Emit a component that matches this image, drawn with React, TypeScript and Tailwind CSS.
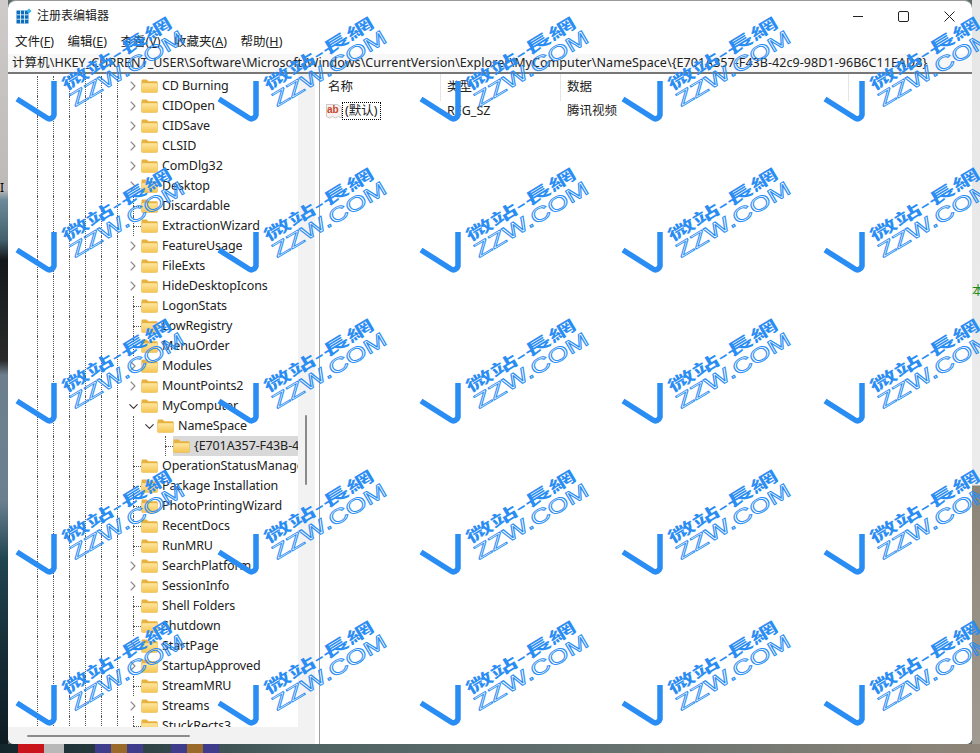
import { ChevronDown, ChevronRight } from "lucide-react";

const CJK = "font-['Noto_Sans','Noto_Sans_CJK_SC',sans-serif]";

type TreeRow = { name: string; depth?: number; kind?: "more" | "open" | "leaf"; selected?: boolean };

const ROWS: TreeRow[] = [
  { name: "CD Burning", kind: "more" },
  { name: "CIDOpen", kind: "more" },
  { name: "CIDSave", kind: "more" },
  { name: "CLSID", kind: "more" },
  { name: "ComDlg32", kind: "more" },
  { name: "Desktop", kind: "more" },
  { name: "Discardable", kind: "leaf" },
  { name: "ExtractionWizard", kind: "leaf" },
  { name: "FeatureUsage", kind: "more" },
  { name: "FileExts", kind: "more" },
  { name: "HideDesktopIcons", kind: "more" },
  { name: "LogonStats", kind: "leaf" },
  { name: "LowRegistry", kind: "leaf" },
  { name: "MenuOrder", kind: "leaf" },
  { name: "Modules", kind: "more" },
  { name: "MountPoints2", kind: "more" },
  { name: "MyComputer", kind: "open" },
  { name: "NameSpace", kind: "open", depth: 1 },
  { name: "{E701A357-F43B-42c9-98D1-96B6C11EAD8}", kind: "leaf", depth: 2, selected: true },
  { name: "OperationStatusManager", kind: "leaf" },
  { name: "Package Installation", kind: "leaf" },
  { name: "PhotoPrintingWizard", kind: "leaf" },
  { name: "RecentDocs", kind: "leaf" },
  { name: "RunMRU", kind: "leaf" },
  { name: "SearchPlatform", kind: "more" },
  { name: "SessionInfo", kind: "more" },
  { name: "Shell Folders", kind: "leaf" },
  { name: "Shutdown", kind: "leaf" },
  { name: "StartPage", kind: "more" },
  { name: "StartupApproved", kind: "more" },
  { name: "StreamMRU", kind: "leaf" },
  { name: "Streams", kind: "more" },
  { name: "StuckRects3", kind: "leaf" },
];

const MENUS = [
  ["文件(", "F", ")"],
  ["编辑(", "E", ")"],
  ["查看(", "V", ")"],
  ["收藏夹(", "A", ")"],
  ["帮助(", "H", ")"],
];

function RegeditIcon() {
  return (
    <svg width="16" height="16" viewBox="0 0 16 16" className="shrink-0">
      <rect x="0.5" y="2.5" width="12" height="13" fill="#0f6cbd" />
      <path d="M4.5 2.5v13M8.5 2.5v13M.5 6.8h12M.5 11.2h12" stroke="#dff1fb" strokeWidth="0.9" />
      <path d="M13 0.5l2.5 2.5-2.5 2.5-2.5-2.5z" fill="#35b6e6" />
    </svg>
  );
}

function FolderIcon() {
  return (
    <svg width="17" height="14" viewBox="0 0 17 14" className="shrink-0">
      <defs>
        <linearGradient id="folder-body" x1="0" y1="0" x2="0" y2="1">
          <stop offset="0" stopColor="#ffe7a0" />
          <stop offset="1" stopColor="#f5c451" />
        </linearGradient>
      </defs>
      <path d="M0.5 1.5a1 1 0 0 1 1-1h4.2l1.6 1.8h8.2a1 1 0 0 1 1 1V5H.5z" fill="#e8b23e" />
      <path d="M.5 4h16v8.5a1 1 0 0 1-1 1h-14a1 1 0 0 1-1-1z" fill="url(#folder-body)" stroke="#e6b548" strokeWidth="0.5" />
    </svg>
  );
}

function ValueIcon() {
  return (
    <svg width="16" height="16" viewBox="0 0 16 16" className="shrink-0">
      <path d="M.5 1.500h11l4 3v10.500l-3-1.500-3 1.500-3-1.500-3 1.500-3-1.500z" fill="#f6f1ef" stroke="#b9b4b4" strokeWidth="0.7" />
      <text x="1" y="10" fontSize="10" fontWeight="700" fill="#c8452d" fontFamily="Liberation Sans, sans-serif">
        ab
      </text>
    </svg>
  );
}

function Guide({ stub }: { stub?: boolean }) {
  return (
    <span className="relative h-5 w-4 shrink-0">
      <span className="absolute top-0 bottom-0 left-2 border-l border-dotted border-[#555]" />
      {stub && <span className="absolute top-2.5 left-2 w-2 border-t border-dotted border-[#555]" />}
    </span>
  );
}

function Twist({ open }: { open: boolean }) {
  return (
    <span className="flex h-5 w-4 shrink-0 items-center justify-center text-[#8a8a8a]">
      {open ? <ChevronDown size={15} strokeWidth={1.7} className="text-[#333]" /> : <ChevronRight size={16} strokeWidth={1.6} />}
    </span>
  );
}

function TreeItem({ row }: { row: TreeRow }) {
  const depth = row.depth ?? 0;
  return (
    <div className="flex h-5 items-center whitespace-nowrap">
      {Array.from({ length: 6 }, (_, i) => (
        <Guide key={i} />
      ))}
      {depth === 0 ? (
        row.kind === "leaf" ? (
          <Guide stub />
        ) : (
          <Twist open={row.kind === "open"} />
        )
      ) : (
        <Guide />
      )}
      {depth === 1 && <Twist open />}
      {depth === 2 && (
        <>
          <span className="w-4 shrink-0" />
          <Guide stub />
        </>
      )}
      <span className={`flex h-5 grow items-center ${row.selected ? "bg-[#d9d9d9]" : ""}`}>
        <FolderIcon />
        <span className="ml-1 text-[12.5px] leading-5 tracking-[-0.1px] text-[#222]">{row.name}</span>
      </span>
    </div>
  );
}

function WatermarkTile() {
  return (
    <svg width="202" height="151" viewBox="0 0 202 151" className="overflow-visible">
      <path d="M17 21 L47 40 Q50 42 53 39 L54 37 L54 3" fill="none" stroke="#2a8df3" strokeWidth="5.500" strokeLinejoin="round" />
      <text
        transform="translate(66 13) rotate(-31)"
        fontSize="16"
        fontWeight="700"
        fill="#2a8df3"
        textLength="125"
        lengthAdjust="spacingAndGlyphs"
        fontFamily="Noto Sans CJK TC, Noto Sans CJK SC, sans-serif"
      >
        微站-長網
      </text>
      <text
        transform="translate(75 29) rotate(-30.500)"
        fontSize="20"
        fill="none"
        stroke="#2a8df3"
        strokeWidth="0.9"
        textLength="129"
        lengthAdjust="spacingAndGlyphs"
        fontFamily="Liberation Sans, sans-serif"
      >
        ZZW.COM
      </text>
    </svg>
  );
}

export default function App() {
  return (
    <div className={`relative flex h-[753px] w-[980px] flex-col overflow-hidden bg-[#5d6b6b] ${CJK}`}>
      <div className="flex h-[744px]">
        {/* desktop showing through on the left */}
        <div className="w-2 shrink-0 bg-[linear-gradient(180deg,#cfcbcb_0,#bdb9b9_190px,#6b8a99_200px,#43606c_240px,#15181a_260px,#2a2a2a_360px,#6d7f8c_375px,#6a8090_500px,#1f4550_560px,#17303a_640px,#0e1c22_744px)] pt-[178px] text-[12px] leading-5 text-black">
          I
        </div>

        {/* registry window */}
        <div className="flex w-[964px] shrink-0 flex-col overflow-hidden rounded-t-lg rounded-b-md border-t border-[#9a9a9a] bg-white">
          <div className="flex h-[30px] shrink-0 items-center pr-[17px] pl-2">
            <RegeditIcon />
            <span className="ml-[5px] text-[12px] text-[#222]">注册表编辑器</span>
            <div className="ml-auto flex items-center gap-[35px]">
              <svg width="10" height="10" viewBox="0 0 10 10">
                <path d="M0 5.500h10" stroke="#222" />
              </svg>
              <svg width="11" height="11" viewBox="0 0 11 11">
                <rect x="0.5" y="0.5" width="10" height="10" rx="1.5" fill="none" stroke="#222" />
              </svg>
              <svg width="11" height="11" viewBox="0 0 11 11">
                <path d="M.5.5l10 10M10.500.5l-10 10" stroke="#222" />
              </svg>
            </div>
          </div>

          <div className="flex h-[23px] shrink-0 items-center gap-[13.5px] pl-[7px] text-[12.5px] text-[#222]">
            {MENUS.map(([head, key, tail]) => (
              <span key={key}>
                {head}
                <span className="underline">{key}</span>
                {tail}
              </span>
            ))}
          </div>

          <div className="flex h-[20px] shrink-0 items-center border-b-2 border-[#777] bg-[#f7f7f7] pl-1 text-[12.5px] tracking-[0.06px] whitespace-nowrap text-[#222]">
            计算机\HKEY_CURRENT_USER\Software\Microsoft\Windows\CurrentVersion\Explorer\MyComputer\NameSpace\{"{"}E701A357-F43B-42c9-98D1-96B6C11EAD8{"}"}
          </div>

          <div className="flex min-h-0 grow">
            {/* key tree */}
            <div className="flex w-[307px] shrink-0 flex-col bg-[#f2f2f2]">
              <div className="flex min-h-0 grow">
                <div className="min-w-0 grow overflow-hidden bg-white pt-[2px] pl-[21px]">
                  {ROWS.map((row) => (
                    <TreeItem key={row.name} row={row} />
                  ))}
                </div>
                <div className="flex w-[17px] shrink-0 flex-col px-[7px] pt-[341px]">
                  <div className="h-[70px] w-[2px] rounded bg-[#8a8a8a]" />
                </div>
              </div>
              <div className="flex h-[17px] shrink-0 items-center pl-[19px]">
                <div className="h-[2px] w-[163px] rounded bg-[#8a8a8a]" />
              </div>
            </div>

            {/* value list */}
            <div className="ml-[4px] grow border-l border-[#a0a0a0] bg-white text-[12.5px] text-[#222]">
              <div className="flex h-[27px] items-center">
                <div className="flex h-full w-[121px] items-center border-r border-[#e5e5e5] pl-2">名称</div>
                <div className="flex h-full w-[120px] items-center border-r border-[#e5e5e5] pl-[6px]">类型</div>
                <div className="flex h-full w-[288px] items-center border-r border-[#e5e5e5] pl-[6px]">数据</div>
              </div>
              <div className="flex h-5 items-center">
                <div className="flex w-[121px] items-center pl-[6px]">
                  <ValueIcon />
                  <span className="border border-dotted border-black px-[2px] leading-[16px]">(默认)</span>
                </div>
                <div className="w-[120px] pl-[6px]">REG_SZ</div>
                <div className="pl-[6px]">腾讯视频</div>
              </div>
            </div>
          </div>
        </div>

        {/* desktop showing through on the right */}
        <div className="w-2 grow overflow-hidden bg-[linear-gradient(180deg,#e6e6e6_0,#ececec_485px,#8d8478_486px,#a09a90_744px)] pt-[281px] text-[12px] leading-5 text-[#1a8a1a]">
          本
        </div>
      </div>

      <div className="flex h-[9px] shrink-0 bg-[linear-gradient(90deg,#13262c_0,#4d6262_300px,#63706e_600px,#8f8578_980px)]">
        <div className="ml-[18px] w-[26px] bg-[#c8141a]" />
        <div className="w-[20px] bg-[#b8b8b8]" />
        <div className="ml-[31px] flex w-[48px] justify-center bg-[#3f3c8c]">
          <div className="w-4 bg-[#9a6a2a]" />
        </div>
        <div className="ml-[28px] flex w-[48px] justify-center bg-[#3f3c8c]">
          <div className="w-4 bg-[#9a6a2a]" />
        </div>
      </div>

      {/* site watermark over everything */}
      <div className="pointer-events-none absolute top-[78px] left-0 grid grid-cols-[repeat(5,202px)] auto-rows-[151px]">
        {Array.from({ length: 25 }, (_, i) => (
          <WatermarkTile key={i} />
        ))}
      </div>
    </div>
  );
}
